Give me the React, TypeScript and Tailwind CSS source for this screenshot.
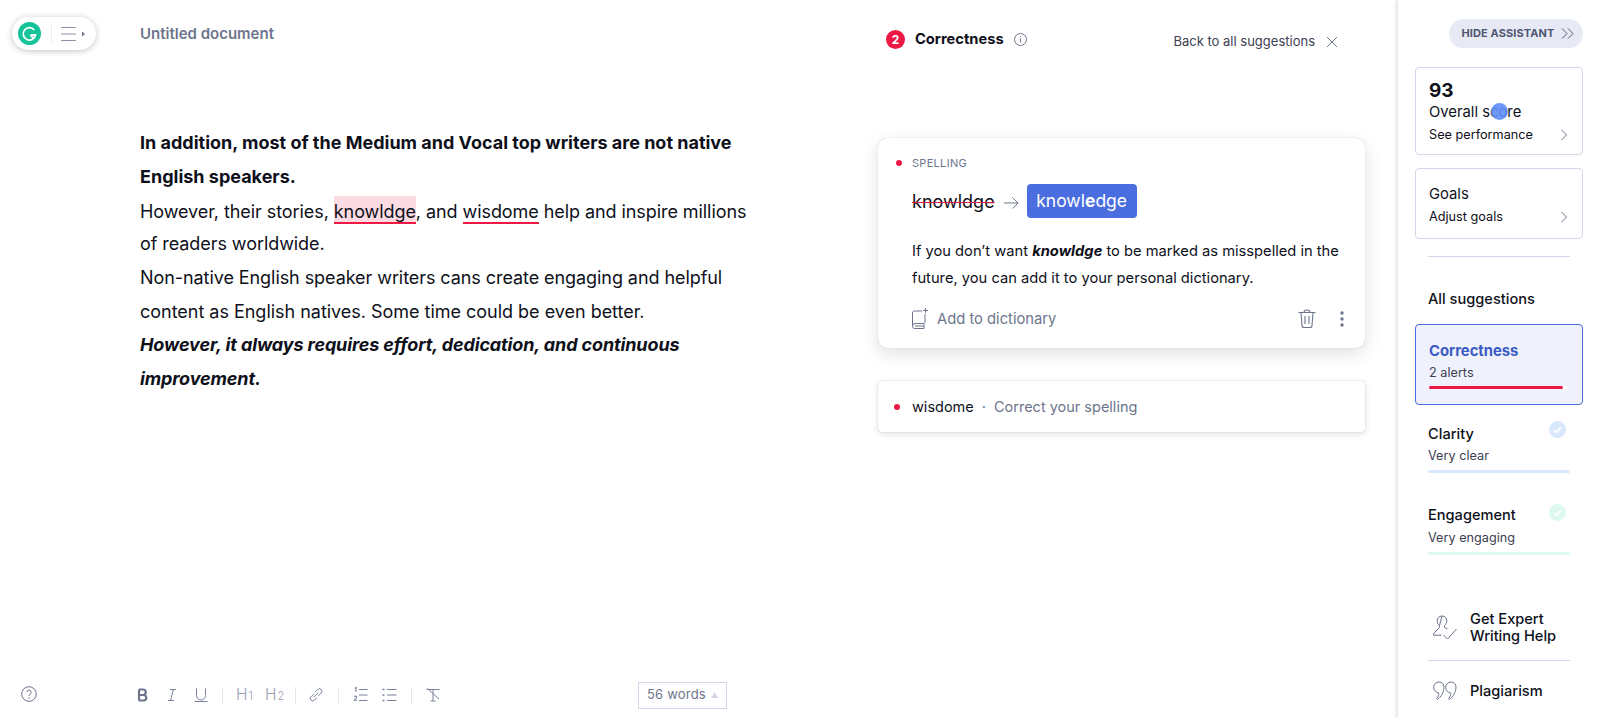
import React from "react";

const Tool = ({ children }: { children: React.ReactNode }) => (
  <div className="w-[28px] flex justify-center shrink-0">
    <svg width="20" height="20" viewBox="0 0 20 20" fill="none" stroke="currentColor" strokeWidth="1">
      {children}
    </svg>
  </div>
);
const Sep = ({ className }: { className: string }) => <div className={`w-px h-[17px] bg-[#e3e5ef] ${className}`} />;
const Check = ({ color }: { color: string }) => (
  <svg width="17" height="17" viewBox="0 0 17 17">
    <circle cx="8.5" cy="8.5" r="8.5" fill={color} />
    <path d="M4.8 8.8l2.6 2.6 5-5.4" stroke="#fff" strokeWidth="1.8" fill="none" />
  </svg>
);
const Chev = () => (
  <svg width="8" height="12" viewBox="0 0 8 12" fill="none" stroke="#6d758d" strokeWidth="1">
    <path d="M1.5 1l5 5-5 5" />
  </svg>
);

export default function App() {
  return (
    <div className="w-[1599px] h-[718px] flex overflow-hidden bg-white text-[#0e101a] font-['Inter',sans-serif] relative">
      {/* floating logo pill */}
      <div className="absolute left-[12px] top-[17px] w-[84px] h-[33px] rounded-full bg-white shadow-[0_1px_6px_rgba(14,16,26,0.25)] flex items-center pl-[6px]">
        <svg width="23" height="23" viewBox="0 0 23 23">
          <circle cx="11.5" cy="11.5" r="11.5" fill="#15c39a" />
          <path d="M16.3 8A6.2 6.2 0 1 0 17.500 13h-4.800" stroke="#fff" strokeWidth="1.8" fill="none" />
          <path d="M12.2 13l3.400 3.400" stroke="#fff" strokeWidth="1.6" />
        </svg>
        <div className="w-px h-[21px] bg-[#eceef4] ml-[10px] mr-[9px]" />
        <svg width="25" height="16" viewBox="0 0 25 16" stroke="#8b92a8" strokeWidth="1">
          <path d="M0 1.5h15M0 8h15M0 14.500h15" />
          <path d="M21 5.500l3 2.500-3 2.500z" fill="#6d758d" stroke="none" />
        </svg>
      </div>

      {/* editor */}
      <div className="w-[878px] shrink-0 flex flex-col pl-[140px] pr-[128px]">
        <div className="pt-[25px] h-[126px] text-[15px] leading-[18px] font-semibold text-[#6d758d]">Untitled document</div>
        <div className="text-[18px] leading-[33.7px]">
          <p className="font-bold">In addition, most of the Medium and Vocal top writers are not native English speakers.</p>
          <p className="tracking-[-0.07px] leading-[37px] h-[33.7px]">
            However, their stories,{" "}
            <span className="inline-block bg-[#fcdbe2] border-b-2 border-[#ee1844] pt-[5px] leading-[21px]">knowldge</span>, and{" "}
            <span className="inline-block border-b-2 border-[#ee1844] pt-[5px] leading-[21px]">wisdome</span> help and inspire millions
          </p>
          <p className="tracking-[-0.07px]">of readers worldwide.</p>
          <p className="tracking-[-0.07px]">Non-native English speaker writers cans create engaging and helpful</p>
          <p className="tracking-[-0.02px]">content as English natives. Some time could be even better.</p>
          <p className="font-bold italic tracking-[-0.12px]">However, it always requires effort, dedication, and continuous improvement.</p>
        </div>
        <div className="mt-auto mb-[10px] flex items-center relative text-[#6d758d] h-[26px]">
          <div className="absolute left-[-119px] top-[4px]">
            <svg width="16" height="16" viewBox="0 0 16 16" fill="none" stroke="#6d758d" strokeWidth="1">
              <circle cx="8" cy="8" r="7.300" />
              <path d="M5.800 6.200a2.200 2.200 0 1 1 3.300 2c-.8.500-1.100.9-1.100 1.700" />
              <circle cx="8" cy="12" r=".7" fill="#6d758d" stroke="none" />
            </svg>
          </div>
          <div className="flex items-center ml-[-11px] text-[#7a819a]">
            <Tool>
              <path d="M6 4.500v11M6 4.500h4.500a2.800 2.800 0 0 1 0 5.500H6M6 10h5a2.800 2.800 0 0 1 0 5.500H6" stroke="#6d758d" strokeWidth="2.200" />
            </Tool>
            <div className="w-px" />
            <Tool>
              <path d="M8 4.500h6M6 15.500h6M11.500 4.500L8.500 15.500" />
            </Tool>
            <div className="w-px" />
            <Tool>
              <path d="M5.500 3.500v7a4.500 4.500 0 0 0 9 0v-7M3.500 16.500h13" />
            </Tool>
            <Sep className="ml-[7px] mr-[7px]" />
            <span className="w-[28px] pl-[6px] text-[#9aa0b8] text-[15.500px] leading-[20px] flex items-baseline font-light">H<span className="text-[11px] ml-[1px]">1</span></span>
            <div className="w-px" />
            <span className="w-[28px] pl-[6px] text-[#9aa0b8] text-[15.500px] leading-[20px] flex items-baseline font-light">H<span className="text-[11px] ml-[1px]">2</span></span>
            <Sep className="ml-[8px] mr-[6px]" />
            <Tool>
              <path d="M7.800 12.200l4.400-4.400M8 8.800l-3 3a2.400 2.400 0 0 0 3.400 3.400l2.500-2.600M9.200 6.900l2.500-2.300a2.400 2.400 0 0 1 3.600 3.300l-3 3" />
            </Tool>
            <Sep className="ml-[8px] mr-[8px]" />
            <Tool>
              <path d="M8 4.500h8.500M8 10h8.500M8 15.500h8.500" strokeWidth="1.100" />
              <path d="M3.800 3.200l1.200-.7v4.500M3.400 11.800c.4-1 2.400-1 2.300.3 0 1-1.900 1.800-2.300 3.100h2.500" strokeWidth="1.100" />
            </Tool>
            <div className="w-px" />
            <Tool>
              <path d="M7 4.500h9.500M7 10h9.500M7 15.500h9.500" strokeWidth="1.100" />
              <path d="M2.500 4.500h2M2.500 10h2M2.500 15.500h2" strokeWidth="1.500" />
            </Tool>
            <Sep className="ml-[7px] mr-[7px]" />
            <Tool>
              <path d="M3.500 4.500h13M10 4.500v11.500M7.500 16h5M4.500 3.500L16 14" />
            </Tool>
          </div>
          <div className="ml-auto mr-[23px] w-[89px] h-[27px] border border-[#d3d6e6] flex items-center pl-[8px] text-[13px] tracking-[0.2px]">
            56 words
            <svg width="7" height="6" viewBox="0 0 7 6" className="ml-[5px]"><path d="M3.500 0L7 6H0z" fill="#d3d6e6" /></svg>
          </div>
        </div>
      </div>

      {/* assistant cards */}
      <div className="w-[520px] shrink-0 flex flex-col">
        <div className="h-[138px] shrink-0 flex pt-[30px] pr-[60px]">
          <div className="w-[19px] h-[19px] ml-[8px] rounded-full bg-[#ee1844] text-white text-[12px] font-bold flex items-center justify-center">2</div>
          <div className="ml-[10px] text-[14.700px] leading-[19px] font-bold">Correctness</div>
          <svg width="13" height="13" viewBox="0 0 13 13" fill="none" stroke="#6d758d" className="ml-[10px] mt-[3px]">
            <circle cx="6.500" cy="6.500" r="6" />
            <path d="M6.500 5.500v4M6.500 3.200v1" />
          </svg>
          <div className="ml-auto mt-[3px] flex items-center h-[17px] text-[13px] text-[#3d4152]">
            Back to all suggestions
            <svg width="12" height="12" viewBox="0 0 12 12" stroke="#6d758d" className="ml-[11px]"><path d="M1 1l10 10M11 1L1 11" /></svg>
          </div>
        </div>
        <div className="w-[487px] h-[210px] shrink-0 rounded-[9px] bg-white shadow-[0_0_1px_rgba(14,16,26,0.3),0_6px_18px_rgba(14,16,26,0.12)] pl-[34px] pr-[20px] pt-[18px] relative">
          <div className="absolute left-[18px] top-[22px] w-[6px] h-[6px] rounded-full bg-[#ee1844]" />
          <div className="text-[11px] leading-[14px] tracking-[0.3px] text-[#6d758d]">SPELLING</div>
          <div className="flex items-center mt-[14px] h-[34px]">
            <span className="text-[18px] line-through decoration-[#ee1844] decoration-1">knowldge</span>
            <svg width="15" height="12" viewBox="0 0 15 12" fill="none" stroke="#6d758d" className="ml-[9px] mt-[4px]"><path d="M0 6h14M8.500 .5L14 6l-5.500 5.500" /></svg>
            <span className="ml-[8px] h-[34px] w-[110px] rounded-[4px] bg-[#4a6ee0] text-white text-[17.500px] flex items-center justify-center">
              knowl<span className="font-bold">e</span>dge
            </span>
          </div>
          <p className="mt-[20px] text-[14.700px] leading-[26.500px]">
            If you don’t want <b className="italic">knowldge</b> to be marked as misspelled in the
            <br />
            future, you can add it to your personal dictionary.
          </p>
          <div className="flex items-center mt-[17px] text-[#6d758d]">
            <svg width="17" height="21" viewBox="0 0 17 21" fill="none" stroke="#6d758d" strokeWidth="1">
              <path d="M10 3H2.500A2 2 0 0 0 .5 5v13.500a2 2 0 0 0 2 2h9.500v-5H3a2.500 2.500 0 0 0-2.500 2.500M13 6v9M3 18h9M13.500 0v5M11 2.500h5" />
            </svg>
            <span className="ml-[8px] text-[14.750px] leading-[20px]">Add to dictionary</span>
            <svg width="18" height="20" viewBox="0 0 17 20" fill="none" stroke="#6d758d" strokeWidth="1.100" className="ml-auto mr-[24px]">
              <path d="M0 3.500h17M5.500 3.500c0-1.500.8-2.500 3-2.500s3 1 3 2.500M2.500 3.500l1 13a2 2 0 0 0 2 2h6a2 2 0 0 0 2-2l1-13M6.500 7v8M10.500 7v8" />
            </svg>
            <svg width="4" height="16" viewBox="0 0 4 16" fill="#6d758d" className="mr-[1px]">
              <circle cx="2" cy="2" r="1.700" /><circle cx="2" cy="8" r="1.700" /><circle cx="2" cy="14" r="1.700" />
            </svg>
          </div>
        </div>
        <div className="w-[487px] h-[51px] mt-[33px] rounded-[4px] bg-white shadow-[0_0_1px_rgba(14,16,26,0.35),0_2px_6px_rgba(14,16,26,0.12)] pl-[16px] flex items-center text-[14.500px]">
          <div className="w-[6px] h-[6px] rounded-full bg-[#ee1844] mr-[12px]" />
          wisdome
          <span className="text-[#6d758d] mx-[8px]">·</span>
          <span className="text-[#6d758d]">Correct your spelling</span>
        </div>
      </div>

      {/* sidebar */}
      <div className="flex-1 bg-white shadow-[-1px_0_4px_rgba(14,16,26,0.18)] pl-[17px] pr-[16px] flex flex-col">
        <div className="mt-[19px] h-[29px] self-end w-[134px] rounded-full bg-[#e7e9f5] flex items-center justify-center pl-[4px] text-[11px] font-bold tracking-[0.1px] text-[#4f5672]">
          HIDE ASSISTANT
          <svg width="13" height="11" viewBox="0 0 13 11" fill="none" stroke="#4f5672" className="ml-[7px]"><path d="M1 .5l5 5-5 5M7 .5l5 5-5 5" /></svg>
        </div>
        <div className="mt-[19px] h-[88px] rounded-[4px] border border-[#d3d6e6] pl-[13px] pr-[14px] pt-[12px] relative">
          <div className="text-[19px] leading-[22px] font-bold">93</div>
          <div className="text-[14.800px] leading-[20px]">Overall score</div>
          <div className="flex items-center justify-between text-[12.700px] leading-[18px] mt-[4px]">See performance <Chev /></div>
          <div className="absolute left-[75px] top-[35px] w-[17px] h-[17px] rounded-full bg-[#5f8ef8] opacity-90" />
        </div>
        <div className="mt-[13px] h-[71px] rounded-[4px] border border-[#d3d6e6] pl-[13px] pr-[14px] pt-[15px]">
          <div className="text-[14.800px] leading-[20px]">Goals</div>
          <div className="flex items-center justify-between text-[12.700px] leading-[18px] mt-[4px]">Adjust goals <Chev /></div>
        </div>
        <div className="mx-[13px] mt-[17px] h-px bg-[#d3d6e6]" />
        <div className="ml-[13px] mt-[32px] text-[14.600px] leading-[20px] font-medium">All suggestions</div>
        <div className="mt-[15px] h-[81px] rounded-[4px] border border-[#4a6ee0] bg-[#eff2fc] px-[13px] pt-[17px]">
          <div className="text-[14.800px] leading-[19px] font-bold text-[#3b5cc4]">Correctness</div>
          <div className="text-[12.700px] leading-[18px] mt-[3px] text-[#3d4152]">2 alerts</div>
          <div className="mt-[4px] h-[3px] rounded-full bg-white"><div className="h-full w-[134px] rounded-full bg-[#ee1844]" /></div>
        </div>
        <div className="mx-[13px] mt-[19px] relative">
          <div className="absolute right-[4px] top-[-3px]"><Check color="#d9e8fd" /></div>
          <div className="text-[14.600px] leading-[20px] font-medium">Clarity</div>
          <div className="text-[12.700px] leading-[18px] mt-[3px] text-[#3d4152]">Very clear</div>
          <div className="mt-[5px] h-[3px] rounded-full bg-[#d9e8fd]" />
        </div>
        <div className="mx-[13px] mt-[32px] relative">
          <div className="absolute right-[4px] top-[-1px]"><Check color="#dcf8f0" /></div>
          <div className="text-[14.600px] leading-[20px] font-medium">Engagement</div>
          <div className="text-[12.700px] leading-[18px] mt-[4px] text-[#3d4152]">Very engaging</div>
          <div className="mt-[5px] h-[3px] rounded-full bg-[#dcf8f0]" />
        </div>
        <div className="mx-[13px] mt-[56px] flex items-center">
          <svg width="24" height="25" viewBox="0 0 24 25" fill="none" stroke="#6d758d" className="ml-[5px] shrink-0">
            <path d="M9 1c2.800 0 4.800 2 4.800 4.800 0 2-1 3.700-2.300 4.700v1.800l3 1.700M6.500 10.500C5 9.500 4.200 7.800 4.200 5.800 4.200 3 6.200 1 9 1zM6.500 10.500v1.800L.5 18.800v1.400h8M10.500 20l4 4 9-10" />
          </svg>
          <div className="ml-[13px] text-[14.600px] leading-[16.500px] font-medium">Get Expert<br />Writing Help</div>
        </div>
        <div className="mx-[13px] mt-[16px] h-px bg-[#d3d6e6]" />
        <div className="mx-[13px] mt-[20px] flex items-center">
          <svg width="24" height="19" viewBox="0 0 24 19" fill="none" stroke="#6d758d" className="ml-[5px] shrink-0">
            <path d="M6 1c2.800 0 5 2 5 5 0 5-3 10-6.500 12.500C4 18.800 3.400 18 3.800 17.300 5 15.800 5.800 14 5.800 12 3 11.800.7 9.300.7 6.300.7 3.300 3 1 6 1zM18 1c2.800 0 5 2 5 5 0 5-3 10-6.500 12.500-.5.300-1.100-.5-.7-1.200C17 15.800 17.800 14 17.800 12 15 11.800 12.700 9.300 12.700 6.300 12.700 3.300 15 1 18 1z" />
          </svg>
          <div className="ml-[13px] text-[14.600px] leading-[18px] font-medium">Plagiarism</div>
        </div>
      </div>
    </div>
  );
}
